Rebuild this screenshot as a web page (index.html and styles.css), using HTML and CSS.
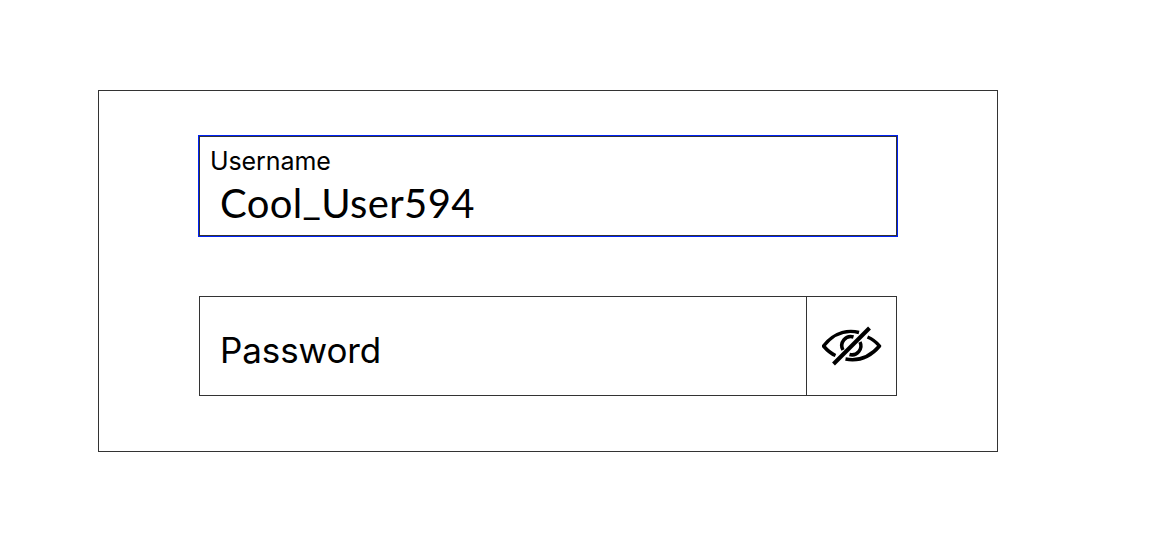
FILE: index.html
```html
<!DOCTYPE html>
<html lang="en">
<head>
<meta charset="utf-8">
<title>Sign in</title>
<link rel="stylesheet" href="styles.css">
</head>
<body>
<form class="panel">
  <label class="field field-active">
    <span class="field-label">Username</span>
    <span class="field-value">Cool<span class="underscore">_</span>User594</span>
  </label>
  <div class="field field-password">
    <span class="field-placeholder">Password</span>
    <button class="toggle" type="button" aria-label="Show password">
      <svg class="eye" viewBox="0.5 0 60 40" fill="none" stroke="#000">
        <path d="M14 29.500Q8 27 2 20C14 5 28 4 37.500 6.500M46 11Q53 14 58 20C47 33 35 35 24 33" stroke-width="3.5" stroke-linejoin="round"/>
        <path d="M21.500 24A9 9 0 0 1 32 11M38.500 16A9 9 0 0 1 28 28.500" stroke-width="3.5"/>
        <path d="M12 38L48 2" stroke-width="4"/>
      </svg>
    </button>
  </div>
</form>
</body>
</html>
```
FILE: styles.css
```css
* { box-sizing: border-box; }
body { margin: 0; padding: 90px 98px; background: #fff; color: #000; font-family: Inter, sans-serif; }
.panel { width: 900px; height: 362px; border: 1px solid #333; padding: 44px 99px; }
.field { display: flex; width: 700px; }
.field-active { flex-direction: column; height: 102px; border: 1px solid #0022f5; box-shadow: inset 0 0 0 1px #333; padding: 9px 11px; }
.field-label { font-size: 25px; line-height: 32px; letter-spacing: -0.1px; }
.field-value { font-family: Lato, sans-serif; font-size: 40px; line-height: 52px; padding-left: 10px; letter-spacing: 0.35px; }
.underscore { line-height: 0; vertical-align: 4px; }
.field-password { width: 698px; height: 100px; margin: 59px 0 0 1px; border: 1px solid #333; }
.field-placeholder { flex: 1; padding: 28px 20px; font-size: 35px; line-height: 50px; letter-spacing: -0.1px; }
.toggle { width: 90px; padding: 0; border: 0; border-left: 1px solid #333; background: none; display: flex; align-items: center; justify-content: center; }
.eye { width: 60px; height: 40px; }
```
